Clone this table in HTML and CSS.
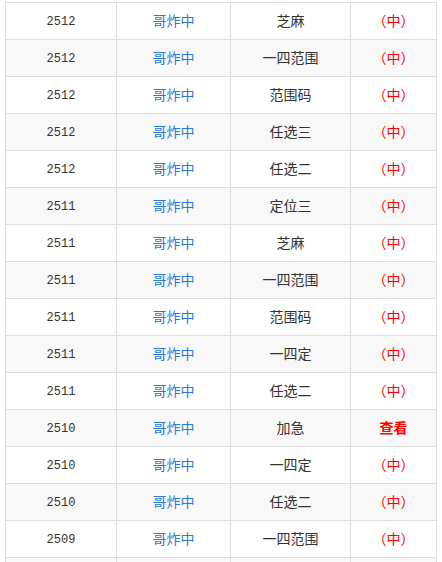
FILE: index.html
```html
<!DOCTYPE html>
<html>
<head>
<meta charset="utf-8">
<link rel="stylesheet" href="styles.css">
</head>
<body>
<div class="wrap">
<table class="list">
<colgroup><col class="c1"><col class="c2"><col class="c3"><col class="c4"></colgroup>
<tbody>
<tr><td class="num">2512</td><td class="name">哥炸中</td><td class="type">芝麻</td><td class="res">（中）</td></tr>
<tr><td class="num">2512</td><td class="name">哥炸中</td><td class="type">一四范围</td><td class="res">（中）</td></tr>
<tr><td class="num">2512</td><td class="name">哥炸中</td><td class="type">范围码</td><td class="res">（中）</td></tr>
<tr><td class="num">2512</td><td class="name">哥炸中</td><td class="type">任选三</td><td class="res">（中）</td></tr>
<tr><td class="num">2512</td><td class="name">哥炸中</td><td class="type">任选二</td><td class="res">（中）</td></tr>
<tr><td class="num">2511</td><td class="name">哥炸中</td><td class="type">定位三</td><td class="res">（中）</td></tr>
<tr><td class="num">2511</td><td class="name">哥炸中</td><td class="type">芝麻</td><td class="res">（中）</td></tr>
<tr><td class="num">2511</td><td class="name">哥炸中</td><td class="type">一四范围</td><td class="res">（中）</td></tr>
<tr><td class="num">2511</td><td class="name">哥炸中</td><td class="type">范围码</td><td class="res">（中）</td></tr>
<tr><td class="num">2511</td><td class="name">哥炸中</td><td class="type">一四定</td><td class="res">（中）</td></tr>
<tr><td class="num">2511</td><td class="name">哥炸中</td><td class="type">任选二</td><td class="res">（中）</td></tr>
<tr><td class="num">2510</td><td class="name">哥炸中</td><td class="type">加急</td><td class="res view">查看</td></tr>
<tr><td class="num">2510</td><td class="name">哥炸中</td><td class="type">一四定</td><td class="res">（中）</td></tr>
<tr><td class="num">2510</td><td class="name">哥炸中</td><td class="type">任选二</td><td class="res">（中）</td></tr>
<tr><td class="num">2509</td><td class="name">哥炸中</td><td class="type">一四范围</td><td class="res">（中）</td></tr>
<tr><td class="num"></td><td class="name"></td><td class="type"></td><td class="res"></td></tr>
</tbody>
</table>
</div>
</body>
</html>
```
FILE: styles.css
```css
html, body {
  margin: 0;
  padding: 0;
  background: #fff;
}
.wrap {
  padding: 2px 0 0 5px;
}
.list {
  border-collapse: collapse;
  table-layout: fixed;
  width: 431px;
  font-family: "Noto Sans CJK SC", "Noto Sans", sans-serif;
  font-size: 14px;
  color: #333;
}
.c1 { width: 111px; }
.c2 { width: 114px; }
.c3 { width: 120px; }
.c4 { width: 86px; }
.list td {
  border: 1px solid #dddddd;
  height: 34px;
  padding: 0 0 2px 0;
  text-align: center;
  vertical-align: middle;
  line-height: 20px;
}
.list tr:nth-child(even) td {
  background: #f8f8f8;
}
.list td.num {
  font-family: "Liberation Mono", monospace;
  font-size: 12px;
  color: #333;
  padding: 2px 0 0 0;
}
.list td.name {
  color: #2a7ad2;
}
.list td.res {
  color: #ff0000;
}
.list td.view {
  font-weight: bold;
}
```
